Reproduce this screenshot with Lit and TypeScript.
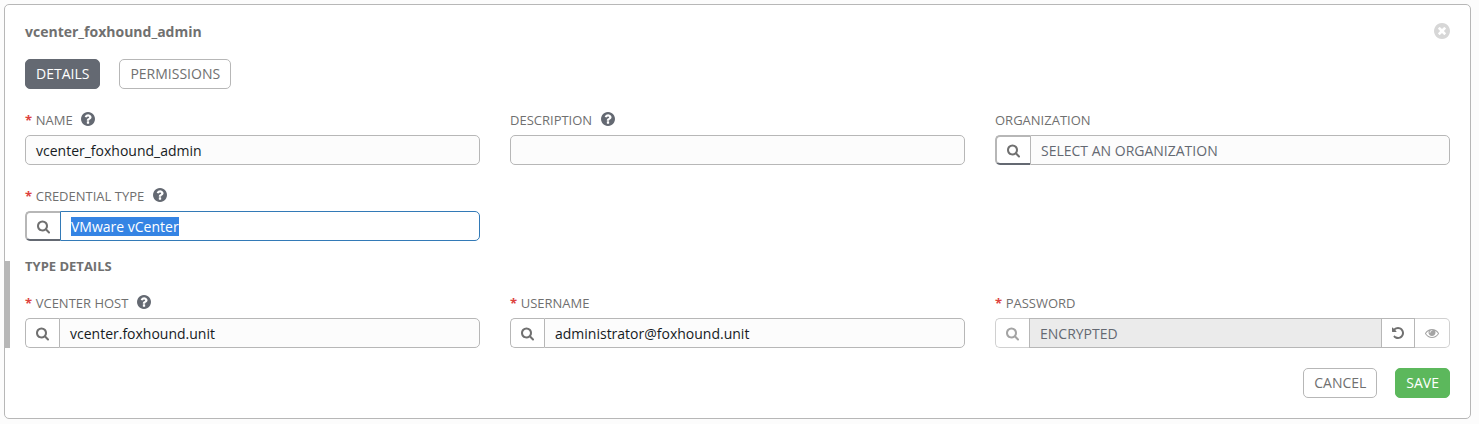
import { LitElement, html, css, svg, nothing } from "lit";
import { customElement, property } from "lit/decorators.js";

const DISC =
  "q0 209-103 385.5t-279.5 279.5-385.5 103-385.5-103-279.5-279.5-103-385.5 103-385.5 279.5-279.5 385.5-103 385.5 103 279.5 279.5 103 385.5z";

const ICONS: Record<string, string> = {
  search:
    "M1216 832q0-185-131.5-316.5t-316.5-131.5-316.5 131.5-131.5 316.5 131.5 316.5 316.5 131.5 316.5-131.5 131.5-316.5zm512 832q0 52-38 90t-90 38q-54 0-90-38l-343-342q-179 124-399 124-143 0-273.5-55.5t-225-150-150-225-55.5-273.5 55.5-273.5 150-225 225-150 273.5-55.5 273.5 55.5 225 150 150 225 55.5 273.5q0 220-124 399l343 343q37 37 37 90z",
  help:
    "M1024 1376v-192q0-14-9-23t-23-9h-192q-14 0-23 9t-9 23v192q0 14 9 23t23 9h192q14 0 23-9t9-23zm256-672q0-88-55.5-163t-138.5-116-170-41q-243 0-371 213-15 24 8 42l132 100q7 6 19 6 16 0 25-12 53-68 86-92 34-24 86-24 48 0 85.5 26t37.5 59q0 38-20 61t-68 45q-63 28-115.5 86.5t-52.5 125.5v36q0 14 9 23t23 9h192q14 0 23-9t9-23q0-19 21.5-49.5t54.5-49.5q32-18 49-28.5t46-35 44.5-48 28-60.5 12.5-81zm384 192" +
    DISC,
  close:
    "M1277 1122q0-26-19-45l-181-181 181-181q19-19 19-45 0-27-19-46l-90-90q-19-19-46-19-26 0-45 19l-181 181-181-181q-19-19-45-19-27 0-46 19l-90 90q-19 19-19 46 0 26 19 45l181 181-181 181q-19 19-19 45 0 27 19 46l90 90q19 19 46 19 26 0 45-19l181-181 181 181q19 19 45 19 27 0 46-19l90-90q19-19 19-46zm387-226" +
    DISC,
  undo:
    "M1664 896q0 156-61 298t-164 245-245 164-298 61q-172 0-327-72.5t-264-204.5q-7-10-6.5-22.5t8.5-20.5l137-138q10-9 25-9 16 2 23 12 73 95 179 147t225 52q104 0 198.5-40.5t163.5-109.5 109.5-163.5 40.5-198.5-40.5-198.5-109.5-163.5-163.5-109.5-198.5-40.5q-98 0-188 35.5t-160 101.5l137 138q31 30 14 69-17 40-59 40h-448q-26 0-45-19t-19-45v-448q0-42 40-59 39-17 69 14l130 129q107-101 244.5-156.5t284.5-55.5q156 0 298 61t245 164 164 245 61 298z",
  eye:
    "M1664 960q-152-236-381-353 61 104 61 225 0 185-131.5 316.5t-316.5 131.5-316.5-131.5-131.5-316.5q0-121 61-225-229 117-381 353 133 205 333.5 326.5t434.5 121.5 434.5-121.5 333.5-326.5zm-720-384q0-20-14-34t-34-14q-125 0-214.5 89.5t-89.5 214.5q0 20 14 34t34 14 34-14 14-34q0-86 61-147t147-61q20 0 34-14t14-34zm848 384q0 34-20 69-140 230-376.5 368.5t-499.5 138.5-499.5-139-376.5-368q-20-35-20-69t20-69q140-229 376.5-368t499.5-139 499.5 139 376.5 368q20 35 20 69z",
};

const icon = (name: string, viewBox = "0 0 1792 1792") =>
  html`<svg class="icon ${name}" viewBox=${viewBox} aria-hidden="true">${svg`<path d=${ICONS[name]}></path>`}</svg>`;

const ROUND = "128 128 1536 1536";
const PADDED = "-64 -64 1920 1920";

@customElement("form-field")
class FormField extends LitElement {
  @property() label = "";
  @property() value = "";
  @property() placeholder = "";
  @property() kind: "text" | "lookup" | "source" | "secret" = "text";
  @property({ type: Boolean }) required = false;
  @property({ type: Boolean }) help = false;
  @property({ type: Boolean }) active = false;

  static styles = css`
    :host { display: block; min-width: 0; }
    .label {
      display: flex; align-items: center; height: 20px; margin-bottom: 5px;
      font-size: 13px; line-height: 20px; color: #707070; white-space: pre;
    }
    .star { width: 10.7px; color: #dd423e; font-weight: 700; }
    .icon { display: block; fill: currentColor; flex: none; }
    .help { width: 14px; height: 14px; margin-left: 8.5px; margin-bottom: 2px; color: #646972; }
    .group { display: flex; height: 30px; }
    .box {
      flex: 1; min-width: 0; box-sizing: border-box; height: 30px; padding: 0 10px;
      border: 1px solid #b7b7b7; border-radius: 5px; background: #fcfcfc;
      font-size: 14px; line-height: 29px; color: #161b1f; white-space: nowrap;
    }
    .button + .box { border-top-left-radius: 0; border-bottom-left-radius: 0; }
    .placeholder { color: #646972; }
    .active { border-color: #337ab7; background: #fff; }
    .mark { display: inline-block; height: 19px; line-height: 19px; background: #3584e4; color: #fff; }
    .button {
      flex: none; box-sizing: border-box; width: 34px; height: 30px;
      display: flex; align-items: center; justify-content: center;
      border: 1px solid #b7b7b7; background: #fff; color: #707070;
    }
    .button:first-child { border-right: 0; border-radius: 5px 0 0 5px; }
    .lookup {
      width: 35px; border-width: 2px; border-bottom-color: #646972;
    }
    .undo { width: 14px; height: 14px; }
    .search { width: 15px; height: 15px; margin-top: 1px; }
    .eye { width: 14px; height: 14px; }
    .dim { border-color: #d0d0d0; color: #a4a4a4; }
    .locked { background: #ebebeb; color: #646972; border-radius: 0; border-right: 0; }
    .end { width: 35px; border-left: 0; border-radius: 0 5px 5px 0; }
  `;

  private renderLead() {
    if (this.kind === "text") return nothing;
    const extra = this.kind === "lookup" ? "lookup" : this.kind === "secret" ? "dim" : "";
    return html`<div class="button ${extra}">${icon("search", PADDED)}</div>`;
  }

  render() {
    const tone = this.kind === "secret" ? "locked" : this.active ? "active" : this.value ? "" : "placeholder";
    const text = this.value || this.placeholder;
    return html`
      <div class="label">${this.required ? html`<span class="star">*</span>` : nothing}<span>${this.label}</span>${this.help ? icon("help", ROUND) : nothing}</div>
      <div class="group">${this.renderLead()}<div class="box ${tone}">${this.active ? html`<span class="mark">${text}</span>` : text}</div>${this.kind === "secret"
        ? html`<div class="button">${icon("undo")}</div><div class="button dim end">${icon("eye")}</div>`
        : nothing}</div>
    `;
  }
}

@customElement("app-root")
class AppRoot extends LitElement {
  static styles = css`
    :host {
      display: block; box-sizing: border-box; height: 424px; padding: 4px 8px 5px 4px;
      background: #fcfcfc; font-family: "Open Sans", sans-serif; font-size: 14px; color: #707070;
    }
    .panel {
      box-sizing: border-box; height: 415px; padding: 16px 20px 20px;
      border: 1px solid #b7b7b7; border-radius: 5px; background: #fff;
    }
    .header { display: flex; justify-content: space-between; align-items: center; height: 21px; }
    .title { font-weight: 700; line-height: 21px; }
    .icon { display: block; width: 16px; height: 16px; margin-bottom: 1px; fill: #d7d7d7; }
    .tabs { display: flex; gap: 19px; margin: 17px 0 21px; }
    .btn {
      box-sizing: border-box; height: 30px; padding: 0 10px; line-height: 28px;
      border: 1px solid #b7b7b7; border-radius: 5px; background: #fff; white-space: nowrap;
    }
    .selected { background: #646972; border-color: #646972; color: #fff; }
    .save { background: #5cb85c; border-color: #5cb85c; color: #fff; }
    .grid { display: grid; grid-template-columns: repeat(3, 455px); column-gap: 30px; row-gap: 21px; }
    .details { margin: 20px 0 20px -20px; padding-left: 15px; border-left: 5px solid #b7b7b7; }
    .subtitle { height: 32px; font-size: 13px; font-weight: 700; line-height: 11px; }
    .footer { display: flex; justify-content: flex-end; gap: 18px; }
  `;

  render() {
    return html`
      <div class="panel">
        <div class="header"><div class="title">vcenter_foxhound_admin</div>${icon("close", ROUND)}</div>
        <div class="tabs"><div class="btn selected">DETAILS</div><div class="btn">PERMISSIONS</div></div>
        <div class="grid">
          <form-field label="NAME" value="vcenter_foxhound_admin" required help></form-field>
          <form-field label="DESCRIPTION" help></form-field>
          <form-field label="ORGANIZATION" kind="lookup" placeholder="SELECT AN ORGANIZATION"></form-field>
          <form-field label="CREDENTIAL TYPE" kind="lookup" value="VMware vCenter" required help active></form-field>
        </div>
        <div class="details">
          <div class="subtitle">TYPE DETAILS</div>
          <div class="grid">
            <form-field label="VCENTER HOST" kind="source" value="vcenter.foxhound.unit" required help></form-field>
            <form-field label="USERNAME" kind="source" value="administrator@foxhound.unit" required></form-field>
            <form-field label="PASSWORD" kind="secret" placeholder="ENCRYPTED" required></form-field>
          </div>
        </div>
        <div class="footer"><div class="btn">CANCEL</div><div class="btn save">SAVE</div></div>
      </div>
    `;
  }
}
